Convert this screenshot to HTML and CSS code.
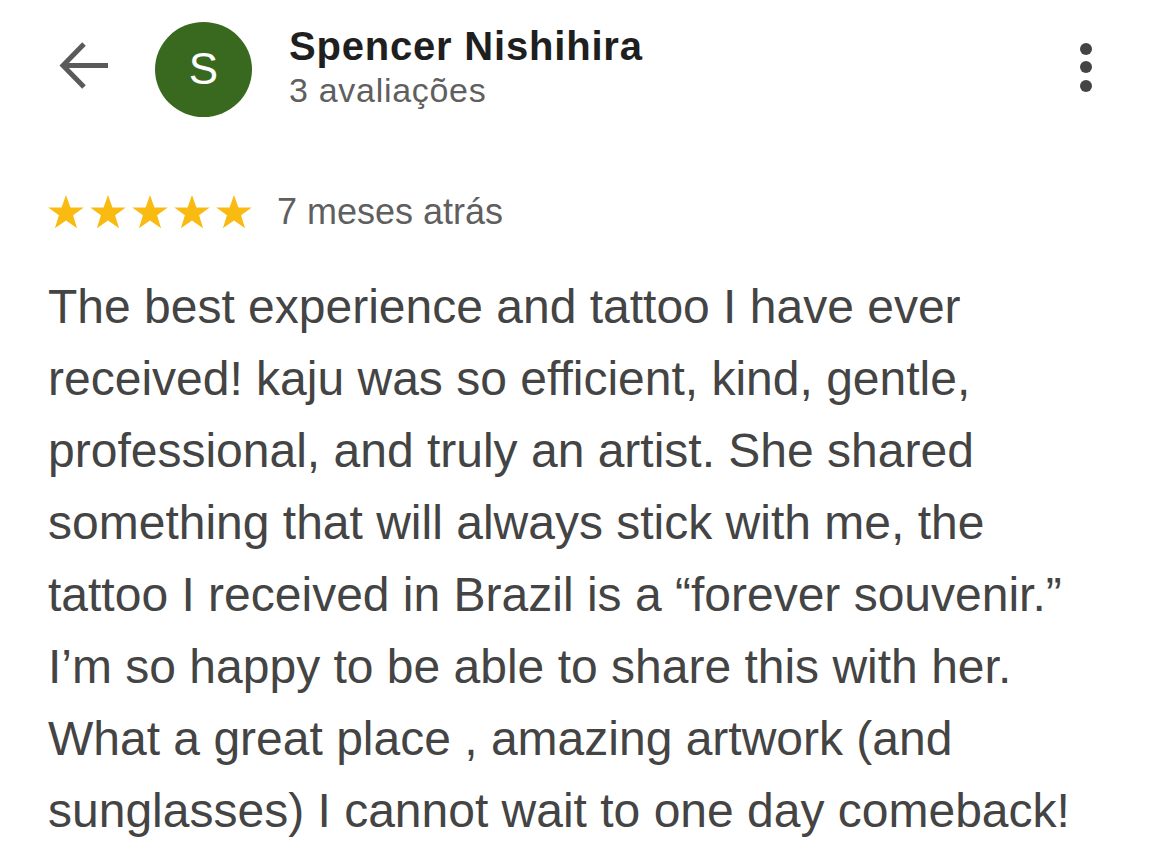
FILE: index.html
```html
<!DOCTYPE html>
<html lang="pt-BR">
<head>
  <meta charset="UTF-8">
  <title>Avaliação | Spencer Nishihira</title>
  <meta name="viewport" content="width=device-width, initial-scale=1.0">
  <link rel="stylesheet" href="styles.css">
</head>
<body>
  <div class="review">
    <div class="review-header">
      <button class="icon-btn back" type="button" aria-label="Voltar">
        <svg width="52" height="52" viewBox="0 0 52 52">
          <path d="M50 24.5H5M26 3L5 24.5L26 46" fill="none" stroke="#5a5a5a" stroke-width="5"/>
        </svg>
      </button>
      <div class="avatar">S</div>
      <div class="author">
        <div class="author-name">Spencer Nishihira</div>
        <div class="author-count">3 avaliações</div>
      </div>
      <button class="icon-btn menu" type="button" aria-label="Mais opções">
        <span class="dot"></span>
        <span class="dot"></span>
        <span class="dot"></span>
      </button>
    </div>

    <div class="rating">
      <div class="stars">
        <svg class="star" viewBox="0 0 24 23"><path d="M12 0l3 8.4h9l-7.2 5.3 2.7 8.8L12 17.3l-7.5 5.2 2.7-8.8L0 8.4h9z"/></svg>
        <svg class="star" viewBox="0 0 24 23"><path d="M12 0l3 8.4h9l-7.2 5.3 2.7 8.8L12 17.3l-7.5 5.2 2.7-8.8L0 8.4h9z"/></svg>
        <svg class="star" viewBox="0 0 24 23"><path d="M12 0l3 8.4h9l-7.2 5.3 2.7 8.8L12 17.3l-7.5 5.2 2.7-8.8L0 8.4h9z"/></svg>
        <svg class="star" viewBox="0 0 24 23"><path d="M12 0l3 8.4h9l-7.2 5.3 2.7 8.8L12 17.3l-7.5 5.2 2.7-8.8L0 8.4h9z"/></svg>
        <svg class="star" viewBox="0 0 24 23"><path d="M12 0l3 8.4h9l-7.2 5.3 2.7 8.8L12 17.3l-7.5 5.2 2.7-8.8L0 8.4h9z"/></svg>
      </div>
      <span class="when">7 meses atrás</span>
    </div>

    <p class="review-text">The best experience and tattoo I have ever received! kaju was so efficient, kind, gentle, professional, and truly an artist. She shared something that will always stick with me, the tattoo I received in Brazil is a “forever souvenir.” I’m so happy to be able to share this with her. What a great place , amazing artwork (and sunglasses) I cannot wait to one day comeback!</p>
  </div>
</body>
</html>
```

FILE: styles.css
```css
body {
  background: #fff;
  color: #444;
  font-family: "Liberation Sans", Arial, sans-serif;
  margin: 0;
}

.review {
  padding: 0 48px;
}

.review-header {
  display: flex;
  align-items: center;
  height: 136px;
}

.icon-btn {
  background: none;
  border: none;
  padding: 0;
  cursor: pointer;
}

.back {
  display: flex;
  margin-left: 10px;
  margin-top: -2px;
}

.avatar {
  width: 97px;
  height: 95px;
  border-radius: 50%;
  background: #38691f;
  color: #fff;
  font-size: 44px;
  display: flex;
  align-items: center;
  justify-content: center;
  margin-left: 45px;
  margin-top: 2px;
}

.author {
  margin-left: 37px;
  display: flex;
  flex-direction: column;
  margin-top: -2px;
}

.author-name {
  font-size: 40px;
  font-weight: bold;
  letter-spacing: 0.8px;
  color: #1f1f1f;
  line-height: 46px;
}

.author-count {
  font-size: 34px;
  letter-spacing: 0.7px;
  color: #5f5f5f;
  line-height: 42px;
}

.menu {
  margin-left: auto;
  margin-right: 30px;
  display: flex;
  flex-direction: column;
  gap: 6.5px;
  margin-top: -2px;
}

.dot {
  width: 12px;
  height: 12px;
  border-radius: 50%;
  background: #444;
}

.rating {
  display: flex;
  align-items: center;
  margin-top: 55px;
}

.stars {
  display: flex;
  gap: 6px;
}

.star {
  width: 36px;
  height: 34px;
  fill: #f9bb12;
}

.when {
  font-size: 36px;
  color: #5f5f5f;
  margin-left: 25px;
}

.review-text {
  font-size: 48px;
  line-height: 72px;
  max-width: 1050px;
  margin: 38px 0 0;
  color: #444;
}
```
